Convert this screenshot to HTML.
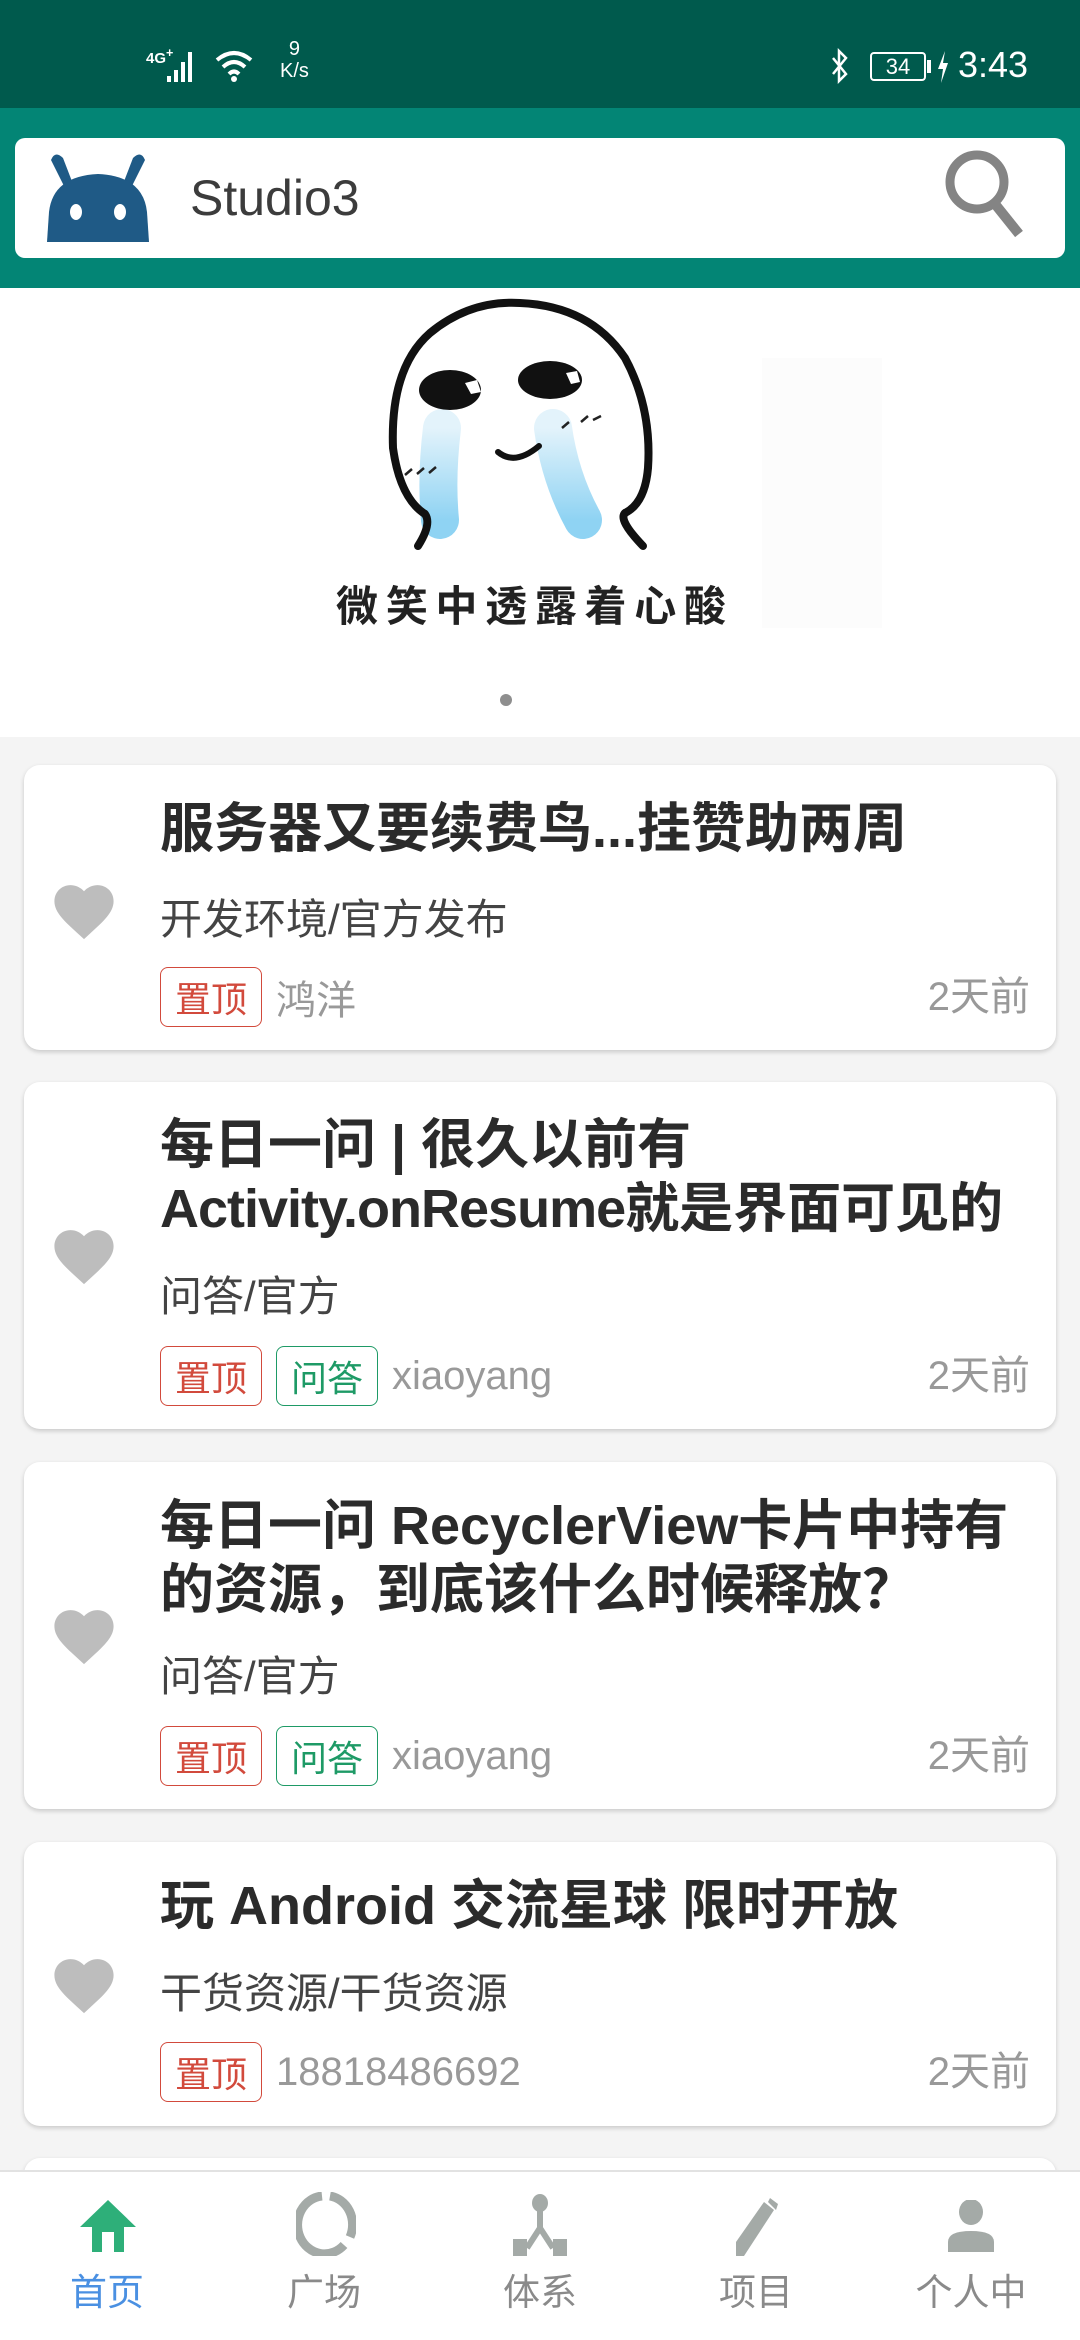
<!DOCTYPE html>
<html><head><meta charset="utf-8"><style>
*{margin:0;padding:0;box-sizing:border-box}
body{width:1080px;height:2340px;overflow:hidden;background:#f4f4f4;font-family:"Liberation Sans","Noto Sans CJK SC",sans-serif;position:relative}
.status{position:absolute;top:0;left:0;width:1080px;height:108px;background:#005a4d;color:#fff}
.bar{position:absolute;top:108px;left:0;width:1080px;height:180px;background:#038575}
.search{position:absolute;left:15px;top:30px;width:1050px;height:120px;background:#fff;border-radius:10px}
.banner{position:absolute;top:288px;left:0;width:1080px;height:449px;background:#fff}
.card{position:absolute;left:24px;width:1032px;background:#fff;border-radius:16px;box-shadow:0 2px 5px rgba(0,0,0,.18)}
.heart{position:absolute;left:26px;width:68px;height:62px}
.title{position:absolute;left:136px;right:20px;font-size:54px;line-height:64px;font-weight:bold;color:#2b2b2b;white-space:nowrap}
.sub{position:absolute;left:136px;font-size:42px;color:#444;line-height:50px}
.tags{position:absolute;left:136px;height:60px;display:flex;align-items:center}
.tag{height:60px;width:102px;border:1.5px solid #d24a3c;border-radius:8px;color:#d24a3c;font-size:36px;display:flex;align-items:center;justify-content:center;margin-right:14px}
.tag.g{border-color:#1e9a66;color:#1e9a66}
.author{font-size:40px;color:#999}
.time{position:absolute;right:26px;font-size:40px;color:#999;line-height:60px}
.nav{position:absolute;left:0;top:2170px;width:1080px;height:170px;background:#fff;border-top:2px solid #e2e2e2}
.ni{position:absolute;top:0;width:140px;text-align:center}
.ni span{position:absolute;top:90px;left:0;width:140px;font-size:37px;color:#8a8a8a}
</style></head><body>
<div class="status">
 <div style="position:absolute;left:146px;top:46px;font-size:15px;font-weight:bold">4G<sup>+</sup></div>
 <svg style="position:absolute;left:165px;top:46px" width="40" height="38"><rect x="2" y="30" width="4" height="6" fill="#fff"/><rect x="9" y="24" width="4" height="12" fill="#fff"/><rect x="16" y="16" width="4" height="20" fill="#fff"/><rect x="23" y="6" width="4" height="30" fill="#fff"/></svg>
 <svg style="position:absolute;left:214px;top:48px" width="44" height="36"><path d="M3 12 Q20 -2 37 12" stroke="#fff" stroke-width="4" fill="none"/><path d="M9 19 Q20 9 31 19" stroke="#fff" stroke-width="4" fill="none"/><path d="M15 26 Q20 21 25 26" stroke="#fff" stroke-width="4" fill="none"/><circle cx="20" cy="31" r="3" fill="#fff"/></svg>
 <div style="position:absolute;left:280px;top:38px;font-size:20px;line-height:22px;text-align:center">9<br>K/s</div>
 <svg style="position:absolute;left:830px;top:48px" width="20" height="36"><path d="M3 10 L16 26 L9 33 V3 L16 10 L3 26" stroke="#fff" stroke-width="2.5" fill="none"/></svg>
 <div style="position:absolute;left:870px;top:52px;width:56px;height:29px;border:2px solid #fff;border-radius:4px;font-size:22px;text-align:center;line-height:25px">34</div>
 <div style="position:absolute;left:927px;top:60px;width:4px;height:13px;background:#fff"></div>
 <svg style="position:absolute;left:936px;top:51px" width="14" height="32"><path d="M9 0 L2 18 H7 L5 32 L12 12 H7 Z" fill="#fff"/></svg>
 <div style="position:absolute;left:958px;top:44px;font-size:36px">3:43</div>
</div>
<div class="bar"><div class="search">
 <svg style="position:absolute;left:30px;top:14px" width="106" height="92" viewBox="0 0 106 92"><path d="M6 8 Q10 -2 18 6 L28 32 L20 36 Z" fill="#1f5a86"/><path d="M100 8 Q96 -2 88 6 L78 32 L86 36 Z" fill="#1f5a86"/><path d="M2 90 L4 60 Q8 24 53 22 Q98 24 102 60 L104 90 Z" fill="#1f5a86"/><ellipse cx="31" cy="60" rx="6" ry="8" fill="#fff"/><ellipse cx="75" cy="60" rx="6" ry="8" fill="#fff"/></svg>
 <div style="position:absolute;left:175px;top:31px;font-size:50px;color:#3c3c3c">Studio3</div>
 <svg style="position:absolute;left:928px;top:8px" width="84" height="96"><circle cx="34" cy="36" r="27" stroke="#848484" stroke-width="9" fill="none"/><path d="M52 58 L76 88" stroke="#848484" stroke-width="10"/></svg>
</div></div>
<div class="banner">
 <svg width="1080" height="449" style="position:absolute;left:0;top:0">
  <defs><linearGradient id="t" x1="0" y1="0" x2="0" y2="1"><stop offset="0" stop-color="#e3f3fb"/><stop offset="1" stop-color="#8fd3f3"/></linearGradient></defs>
  <rect x="762" y="70" width="120" height="270" fill="#fcfcfc"/>
  <path d="M442 140 Q436 190 440 232" stroke="url(#t)" stroke-width="38" stroke-linecap="round" fill="none"/>
  <path d="M553 140 Q560 190 583 232" stroke="url(#t)" stroke-width="38" stroke-linecap="round" fill="none"/>
  <path d="M425 226 Q400 210 393 160 Q390 80 430 45 Q470 12 520 15 Q590 18 625 70 Q652 120 648 180 Q645 215 625 225" stroke="#111" stroke-width="8" fill="none" stroke-linejoin="round"/>
  <path d="M425 226 Q432 236 418 258 M625 225 Q618 232 643 258" stroke="#111" stroke-width="8" stroke-linecap="round" fill="none"/>
  <ellipse cx="450" cy="102" rx="31" ry="20" fill="#111"/><ellipse cx="550" cy="92" rx="32" ry="19" fill="#111"/>
  <path d="M465 95 l12 -3 l4 12 l-10 2z M566 85 l11 -2 l3 11 l-9 2z" fill="#fff"/>
  <path d="M498 164 Q515 178 539 158" stroke="#111" stroke-width="6" fill="none" stroke-linecap="round"/>
  <path d="M405 187 l7 -6 M417 186 l7 -6 M429 185 l7 -6 M562 140 l7 -6 M581 134 l7 -6 M593 132 l8 -4" stroke="#222" stroke-width="2.5"/>
  <text x="336" y="333" font-family="Noto Sans CJK SC,sans-serif" font-size="42" font-weight="bold" fill="#222" textLength="390">微笑中透露着心酸</text>
  <circle cx="506" cy="412" r="6" fill="#8e8e8e"/>
 </svg>
</div>

<div class="card" style="top:765px;height:285px">
 <svg class="heart" style="top:115px" viewBox="0 0 24 22"><path d="M12 21 L10.5 19.6 C5 14.6 1.5 11.5 1.5 7.5 C1.5 4.3 4 1.8 7.2 1.8 C9 1.8 10.8 2.6 12 4 C13.2 2.6 15 1.8 16.8 1.8 C20 1.8 22.5 4.3 22.5 7.5 C22.5 11.5 19 14.6 13.5 19.6 Z" fill="#bdbdbd"/></svg>
 <div class="title" style="top:32px">服务器又要续费鸟...挂赞助两周</div>
 <div class="sub" style="top:130px">开发环境/官方发布</div>
 <div class="tags" style="top:202px"><div class="tag">置顶</div><div class="author">鸿洋</div></div>
 <div class="time" style="top:202px">2天前</div>
</div>

<div class="card" style="top:1082px;height:347px">
 <svg class="heart" style="top:143px" viewBox="0 0 24 22"><path d="M12 21 L10.5 19.6 C5 14.6 1.5 11.5 1.5 7.5 C1.5 4.3 4 1.8 7.2 1.8 C9 1.8 10.8 2.6 12 4 C13.2 2.6 15 1.8 16.8 1.8 C20 1.8 22.5 4.3 22.5 7.5 C22.5 11.5 19 14.6 13.5 19.6 Z" fill="#bdbdbd"/></svg>
 <div class="title" style="top:31px">每日一问 | 很久以前有<br><span style="letter-spacing:-1px">Activity.onResume</span>就是界面可见的</div>
 <div class="sub" style="top:190px">问答/官方</div>
 <div class="tags" style="top:264px"><div class="tag">置顶</div><div class="tag g">问答</div><div class="author">xiaoyang</div></div>
 <div class="time" style="top:264px">2天前</div>
</div>

<div class="card" style="top:1462px;height:347px">
 <svg class="heart" style="top:143px" viewBox="0 0 24 22"><path d="M12 21 L10.5 19.6 C5 14.6 1.5 11.5 1.5 7.5 C1.5 4.3 4 1.8 7.2 1.8 C9 1.8 10.8 2.6 12 4 C13.2 2.6 15 1.8 16.8 1.8 C20 1.8 22.5 4.3 22.5 7.5 C22.5 11.5 19 14.6 13.5 19.6 Z" fill="#bdbdbd"/></svg>
 <div class="title" style="top:32px">每日一问 RecyclerView卡片中持有<br>的资源，到底该什么时候释放？</div>
 <div class="sub" style="top:190px">问答/官方</div>
 <div class="tags" style="top:264px"><div class="tag">置顶</div><div class="tag g">问答</div><div class="author">xiaoyang</div></div>
 <div class="time" style="top:264px">2天前</div>
</div>

<div class="card" style="top:1842px;height:284px">
 <svg class="heart" style="top:112px" viewBox="0 0 24 22"><path d="M12 21 L10.5 19.6 C5 14.6 1.5 11.5 1.5 7.5 C1.5 4.3 4 1.8 7.2 1.8 C9 1.8 10.8 2.6 12 4 C13.2 2.6 15 1.8 16.8 1.8 C20 1.8 22.5 4.3 22.5 7.5 C22.5 11.5 19 14.6 13.5 19.6 Z" fill="#bdbdbd"/></svg>
 <div class="title" style="top:32px">玩 Android 交流星球 限时开放</div>
 <div class="sub" style="top:127px">干货资源/干货资源</div>
 <div class="tags" style="top:200px"><div class="tag">置顶</div><div class="author">18818486692</div></div>
 <div class="time" style="top:200px">2天前</div>
</div>
<div class="card" style="top:2158px;height:60px"></div>

<div class="nav">
 <div class="ni" style="left:37px"><svg style="position:absolute;left:41px;top:28px" width="60" height="52"><path d="M30 0 L58 27 H46 V52 H36 V32 H24 V52 H14 V27 H2 Z" fill="#2eaf79"/></svg><span style="color:#4a90e2">首页</span></div>
 <div class="ni" style="left:254px"><svg style="position:absolute;left:42px;top:20px" width="60" height="64"><path d="M26 4 A27 29 0 1 0 48 53" stroke="#a4aaa7" stroke-width="9" fill="none"/><path d="M34 4 A27 29 0 0 1 54 45" stroke="#a4aaa7" stroke-width="9" fill="none"/></svg><span>广场</span></div>
 <div class="ni" style="left:470px"><svg style="position:absolute;left:43px;top:22px" width="54" height="62"><ellipse cx="27" cy="9" rx="8" ry="9" fill="#a4aaa7"/><path d="M27 16 V34 L14 54 M27 34 L40 54" stroke="#a4aaa7" stroke-width="6" fill="none"/><rect x="0" y="45" width="14" height="17" fill="#a4aaa7"/><rect x="40" y="45" width="14" height="17" fill="#a4aaa7"/></svg><span>体系</span></div>
 <div class="ni" style="left:686px"><svg style="position:absolute;left:44px;top:26px" width="56" height="58"><path d="M6 58 V44 L34 4 L44 12 L14 58 Z" fill="#a4aaa7"/><path d="M40 0 L48 6 L46 12 L38 4 Z" fill="#a4aaa7"/></svg><span>项目</span></div>
 <div class="ni" style="left:901px"><svg style="position:absolute;left:45px;top:28px" width="50" height="54"><ellipse cx="25" cy="12" rx="12" ry="13" fill="#a4aaa7"/><path d="M2 52 V42 Q2 31 25 31 Q48 31 48 42 V52 Z" fill="#a4aaa7"/></svg><span>个人中</span></div>
</div>
</body></html>
